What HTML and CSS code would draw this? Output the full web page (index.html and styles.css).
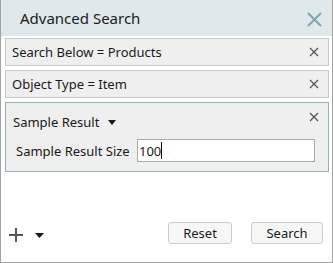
FILE: index.html
```html
<!DOCTYPE html>
<html>
<head>
<meta charset="utf-8">
<link rel="stylesheet" href="styles.css">
</head>
<body>
<div class="dialog">
  <div class="header">
    <span class="title">Advanced Search</span>
    <svg class="close-big" width="15" height="15" viewBox="0 0 15 15"><path d="M1 1L14 14M14 1L1 14" stroke="#7fa7b0" stroke-width="2" fill="none"/></svg>
  </div>
  <div class="body">
    <div class="row">
      <span class="label">Search Below = Products</span>
      <svg class="x-small" width="10" height="10" viewBox="0 0 10 10"><path d="M1 1L9 9M9 1L1 9" stroke="#555" stroke-width="1.3" fill="none"/></svg>
    </div>
    <div class="row">
      <span class="label">Object Type = Item</span>
      <svg class="x-small" width="10" height="10" viewBox="0 0 10 10"><path d="M1 1L9 9M9 1L1 9" stroke="#555" stroke-width="1.3" fill="none"/></svg>
    </div>
    <div class="row row-active">
      <div class="row-head">
        <span class="label">Sample Result</span>
        <svg class="caret" width="8" height="5" viewBox="0 0 8 5"><path d="M0 0H8L4 5Z" fill="#1a1a1a"/></svg>
      </div>
      <svg class="x-small x-abs" width="10" height="10" viewBox="0 0 10 10"><path d="M1 1L9 9M9 1L1 9" stroke="#555" stroke-width="1.3" fill="none"/></svg>
      <div class="field">
        <span class="field-label">Sample Result Size</span>
        <div class="input"><span class="value">100</span><span class="cursor"></span></div>
      </div>
    </div>
  </div>
  <div class="footer">
    <div class="add">
      <svg width="16" height="16" viewBox="0 0 16 16"><path d="M8 1V15M1 8H15" stroke="#555" stroke-width="2" fill="none"/></svg>
      <svg class="caret2" width="9" height="5" viewBox="0 0 9 5"><path d="M0 0H9L4.5 5Z" fill="#1a1a1a"/></svg>
    </div>
    <div class="buttons">
      <button class="btn btn-reset">Reset</button>
      <button class="btn btn-search">Search</button>
    </div>
  </div>
</div>
</body>
</html>
```
FILE: styles.css
```css
html, body {
  margin: 0;
  padding: 0;
  background: #ffffff;
}
body {
  font-family: "Noto Sans", "Open Sans", sans-serif;
  color: #1a1a1a;
}
.dialog {
  width: 333px;
  height: 263px;
  box-sizing: border-box;
  border: 1px solid #a3a3a3;
  border-top: none;
  display: flex;
  flex-direction: column;
  background: #ffffff;
}
.header {
  height: 36px;
  background: #dfe8eb;
  display: flex;
  align-items: center;
  justify-content: space-between;
  padding: 0 10px 0 19px;
  flex-shrink: 0;
}
.title {
  font-size: 15px;
  color: #1c1c1c;
}
.close-big {
  display: block;
  margin-top: 2px;
}
.body {
  display: flex;
  flex-direction: column;
  gap: 4px;
  padding: 2px 3px 0 4px;
}
.row {
  position: relative;
  height: 28px;
  box-sizing: border-box;
  border: 1px solid #c9c9c9;
  background: #efefef;
  display: flex;
  align-items: center;
  justify-content: space-between;
  padding: 0 9px 0 6px;
}
.label {
  font-size: 13px;
}
.x-small {
  display: block;
}
.row-active {
  height: 70px;
  border-color: #92b3bb;
  flex-direction: column;
  align-items: stretch;
  justify-content: flex-start;
  padding: 9px 9px 0 7px;
}
.row-head {
  display: flex;
  align-items: center;
  gap: 9px;
  height: 20px;
}
.x-abs {
  position: absolute;
  top: 9px;
  right: 9px;
}
.field {
  display: flex;
  align-items: center;
  margin-top: 7px;
  padding-left: 3px;
}
.field-label {
  font-size: 13px;
  width: 121px;
  white-space: nowrap;
}
.input {
  width: 178px;
  height: 23px;
  box-sizing: border-box;
  border: 1px solid #ababab;
  background: #ffffff;
  display: flex;
  align-items: center;
  padding-left: 1px;
  font-size: 13px;
}
.cursor {
  display: block;
  width: 1px;
  height: 17px;
  background: #000;
}
.footer {
  margin-top: auto;
  display: flex;
  align-items: flex-end;
  justify-content: space-between;
  padding: 0 9px 18px 7px;
}
.add {
  display: flex;
  align-items: center;
  gap: 11px;
  padding-bottom: 1px;
}
.add svg {
  display: block;
}
.buttons {
  display: flex;
  gap: 19px;
}
.btn {
  height: 22px;
  box-sizing: border-box;
  border: 1px solid #cccccc;
  border-radius: 3px;
  background: #f7f7f7;
  font-family: "Noto Sans", "Open Sans", sans-serif;
  font-size: 13px;
  color: #1a1a1a;
  padding: 0;
  line-height: 18px;
}
.btn-reset {
  width: 64px;
}
.btn-search {
  width: 72px;
}
```
